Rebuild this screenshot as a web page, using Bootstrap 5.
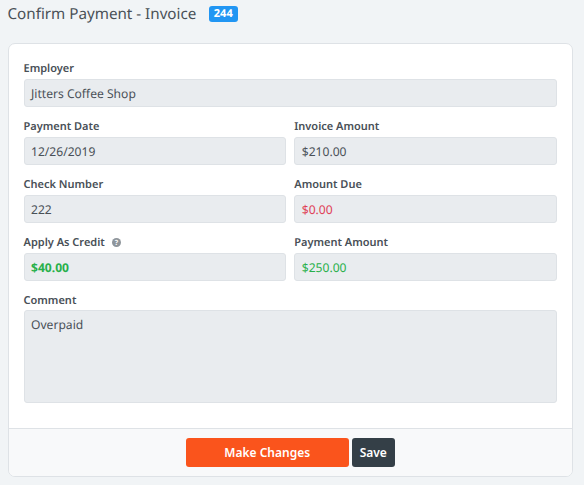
<!doctype html>
<html lang="en"><head><meta charset="utf-8"><title>Confirm Payment</title>
<link rel="stylesheet" href="https://cdn.jsdelivr.net/npm/bootstrap@5.3.0/dist/css/bootstrap.min.css">
<style>
html,body{height:100%;overflow:hidden}
body{background:#f1f4f6;font-family:"Noto Sans",sans-serif;color:#495057;font-size:12px;padding:0 11px 0 7.5px;text-rendering:geometricPrecision}
.pg-head{height:43px;padding-bottom:15px;gap:12.5px}
.pg-title{font-size:15.2px;font-weight:400;color:#495057;margin:0;line-height:28px}
.pg-badge{background:#2196f3;color:#fff;font-size:11px;font-weight:700;padding:2px 5px;border-radius:3px;line-height:12px}
.pay-card{border:1px solid #dee2e6;border-radius:7px;height:433.5px;background:#fff}
.pay-body{padding:15px 15px 0;flex:1}
.fld{margin-bottom:10px}
.fld-label{font-size:11px;font-weight:600;color:#495057;line-height:18px;padding-top:1px;height:20px;margin:0;display:block}
.fld-input{background:#e9ecef;border:1px solid #dee2e6;border-radius:3px;height:28px;font-size:12.1px;padding:1px 6.5px 0;line-height:26px;color:#495057}
.fld-tight{margin-bottom:0}
.fld-tight .fld-label{height:19px}
.fld-area{height:93px;padding-top:4px;line-height:20px}
.grid-row{--bs-gutter-x:8px}
.txt-green{color:#28b04a}
.txt-red{color:#e03e55}
.pay-foot{height:48px;background:#f8f9fa;border-top:1px solid #dee2e6;border-radius:0 0 6px 6px;gap:3px;padding-top:9px}
.btn-make{width:163px;height:29px;background:#fa541c;border:0;color:#fff;font-size:12px;font-weight:600;border-radius:3px;padding:1px 0 0}
.btn-save{width:43px;height:29px;background:#343f47;border:0;color:#fff;font-size:12px;font-weight:600;border-radius:3px;padding:1px 0 0}
.btn-make:hover{background:#fa541c;color:#fff}.btn-save:hover{background:#343f47;color:#fff}
.help-ico{margin-left:4px;vertical-align:-1px}
</style></head><body>
<div class="d-flex align-items-center pg-head"><h1 class="pg-title">Confirm Payment - Invoice</h1><span class="pg-badge">244</span></div>
<div class="pay-card d-flex flex-column">
<div class="pay-body">
<div class="fld"><label class="fld-label">Employer</label><div class="fld-input">Jitters Coffee Shop</div></div>
<div class="row grid-row">
<div class="col-6"><div class="fld"><label class="fld-label">Payment Date</label><div class="fld-input">12/26/2019</div></div></div>
<div class="col-6"><div class="fld"><label class="fld-label">Invoice Amount</label><div class="fld-input">$210.00</div></div></div>
<div class="col-6"><div class="fld"><label class="fld-label">Check Number</label><div class="fld-input">222</div></div></div>
<div class="col-6"><div class="fld"><label class="fld-label">Amount Due</label><div class="fld-input txt-red">$0.00</div></div></div>
<div class="col-6"><div class="fld"><label class="fld-label">Apply As Credit <svg class="help-ico" width="9" height="9" viewBox="0 0 10 10"><circle cx="5" cy="5" r="5" fill="#8e959b"/><text x="5" y="8" text-anchor="middle" font-size="8" font-weight="700" fill="#fff" font-family="Noto Sans">?</text></svg></label><div class="fld-input txt-green fw-bold">$40.00</div></div></div>
<div class="col-6"><div class="fld"><label class="fld-label">Payment Amount</label><div class="fld-input txt-green">$250.00</div></div></div>
</div>
<div class="fld fld-tight"><label class="fld-label">Comment</label><div class="fld-input fld-area">Overpaid</div></div>
</div>
<div class="pay-foot d-flex justify-content-center align-items-start"><button class="btn btn-make" type="button">Make Changes</button><button class="btn btn-save" type="button">Save</button></div>
</div>
<script src="https://cdn.jsdelivr.net/npm/bootstrap@5.3.0/dist/js/bootstrap.bundle.min.js"></script>
</body></html>
